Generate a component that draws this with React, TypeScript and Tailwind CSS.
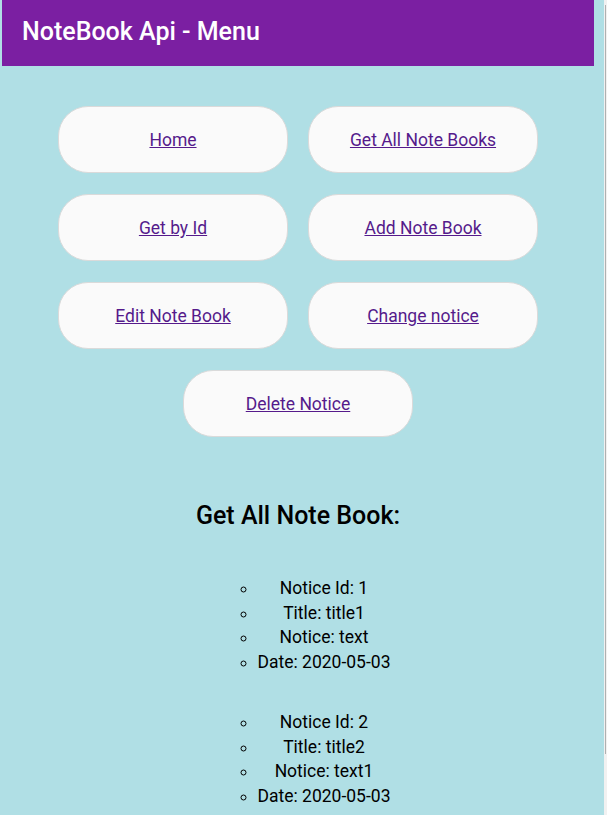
import React from "react";

const buttons = [
  "Home",
  "Get All Note Books",
  "Get by Id",
  "Add Note Book",
  "Edit Note Book",
  "Change notice",
];

const notes = [
  { id: 1, title: "title1", text: "text", date: "2020-05-03" },
  { id: 2, title: "title2", text: "text1", date: "2020-05-03" },
];

function Btn({ label }: { label: string }) {
  return (
    <div className="w-[230px] h-[67px] rounded-[30px] bg-[#fafafa] border border-[#dadada] flex items-center justify-center">
      <a href="#" className="text-[17.5px] text-[#551a8b] underline mt-[2px]">
        {label}
      </a>
    </div>
  );
}

export default function App() {
  return (
    <div
      className="w-[607px] h-[815px] overflow-hidden flex bg-[#b0dfe5]"
      style={{ fontFamily: "Roboto, 'Noto Sans', sans-serif" }}
    >
      <div className="w-[604px] h-full flex flex-col">
        <div className="ml-[2px] w-[592px] h-[66px] bg-[#7b1fa2] flex items-center pl-[20px] shrink-0">
          <h1 className="text-white text-[25px] font-medium leading-none -mt-[4px]">
            NoteBook Api - Menu
          </h1>
        </div>
        <div className="ml-[2px] w-[592px] flex flex-col items-center">
          <div className="mt-[40px] grid grid-cols-2 gap-x-[20px] gap-y-[21px]">
            {buttons.map((b) => (
              <Btn key={b} label={b} />
            ))}
          </div>
          <div className="mt-[21px]">
            <Btn label="Delete Notice" />
          </div>
          <h2 className="mt-[65px] text-[25px] font-medium text-black leading-[28px]">
            Get All Note Book:
          </h2>
          <div className="mt-[46px] flex flex-col gap-[35px] text-[17.5px] text-black leading-[24.7px] ml-[52px]">
            {notes.map((n) => (
              <ul key={n.id} className="list-[circle] text-center">
                <li>Notice Id: {n.id}</li>
                <li>Title: {n.title}</li>
                <li>Notice: {n.text}</li>
                <li>Date: {n.date}</li>
              </ul>
            ))}
          </div>
        </div>
      </div>
      <div className="w-[3px] h-full bg-[#f1f1f1] flex justify-center pt-[5px]">
        <div className="w-[1px] h-[749px] bg-[#b0b0b0]" />
      </div>
    </div>
  );
}
